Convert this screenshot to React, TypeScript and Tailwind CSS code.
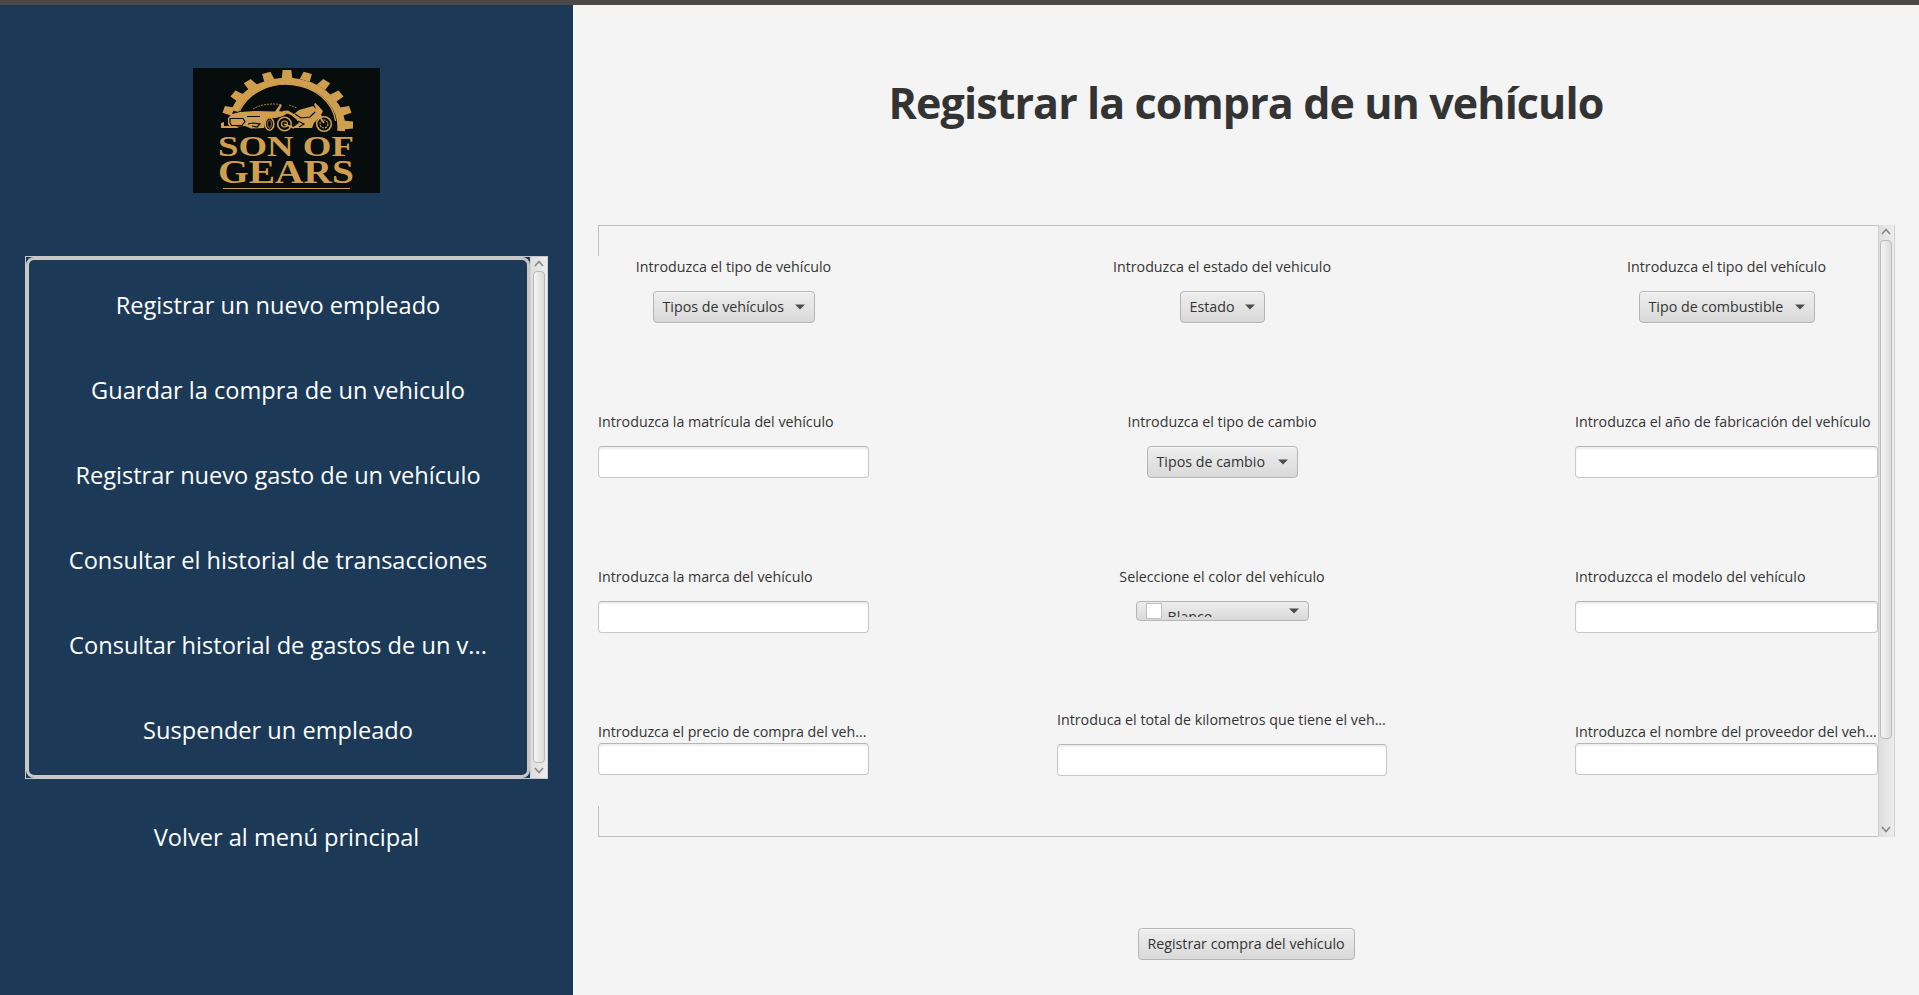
import type { ReactNode } from "react";

const MENU = [
  "Registrar un nuevo empleado",
  "Guardar la compra de un vehiculo",
  "Registrar nuevo gasto de un vehículo",
  "Consultar el historial de transacciones",
  "Consultar historial de gastos de un v...",
  "Suspender un empleado",
];

const TEETH = [-73.5, -55, -37, -18.3, 0, 18.3, 37, 55, 73.5, 90];

function Caret() {
  return (
    <svg viewBox="0 0 10 6" className="h-[6px] w-[10px] shrink-0">
      <path d="M0 .5h10L5 5.5z" fill="#4d4d4d" />
    </svg>
  );
}

function Combo({ text, width }: { text: string; width: string }) {
  return (
    <button
      className={`flex h-8 items-center justify-between rounded-[4px] border border-[#b5b5b5] bg-linear-to-b from-[#eeeeee] to-[#d9d9d9] pr-[9px] pl-[9px] shadow-[inset_0_1px_0_#f8f8f8,0_1px_0_#fafafa] ${width}`}
    >
      <span className="h-[22px] leading-[22px] whitespace-nowrap">{text}</span>
      <Caret />
    </button>
  );
}

function Field() {
  return (
    <input className="block h-8 w-full rounded-[4px] border border-[#c8c8c8] border-t-[#b5b5b5] bg-white shadow-[inset_0_2px_2px_#eeeeee] outline-none" />
  );
}

function Cell({ label, left, children }: { label: string; left?: boolean; children: ReactNode }) {
  return (
    <div className={`flex flex-col gap-[14px] ${left ? "items-start" : "items-center"}`}>
      <span className="h-5 leading-5 whitespace-nowrap">{label}</span>
      {children}
    </div>
  );
}

function Chevron({ up }: { up?: boolean }) {
  return (
    <svg viewBox="0 0 10 7" className="h-[7px] w-[10px] shrink-0">
      <path d={up ? "M1 6L5 1.5 9 6" : "M1 1l4 4.5L9 1"} fill="none" stroke="#858585" strokeWidth="1.5" />
    </svg>
  );
}

function ScrollBar({ size, thumb }: { size: string; thumb: string }) {
  return (
    <div
      className={`flex shrink-0 flex-col items-center border-x border-x-[#d0d0d0] bg-linear-to-r from-[#dedede] to-[#ededed] pb-[4px] ${size}`}
    >
      <Chevron up />
      <div className="mt-[4px] flex min-h-0 w-full flex-1 justify-center px-px">
        <div className={`w-full max-w-[12px] rounded-[4px] border border-[#b9b9b9] bg-linear-to-r from-[#f4f4f4] to-[#dcdcdc] ${thumb}`} />
      </div>
      <div className="mt-[4px] flex">
        <Chevron />
      </div>
    </div>
  );
}

function Logo() {
  return (
    <svg viewBox="0 0 187 125" className="h-[125px] w-[187px] bg-[#070c0d]">
      <g transform="translate(94 57) scale(1.2 1)">
        <g fill="#cf9f4f">
          {TEETH.map((a) => (
            <path key={a} d="M-4.400 -47L-3.600 -55H3.600L4.400 -47z" transform={`rotate(${a})`} />
          ))}
        </g>
        <path d="M-43.600 -14A45.800 45.800 0 0 1 45 6" fill="none" stroke="#cf9f4f" strokeWidth="6.500" />
        <path d="M-39.500 -14A41.500 41.500 0 0 1 40.500 -4" fill="none" stroke="#cf9f4f" strokeWidth="1.100" />
      </g>
      <path d="M60 41C66 37 76 35 88 36.500M96 37l8 3" fill="none" stroke="#cf9f4f" strokeWidth=".8" strokeDasharray="2 1" />
      <g fill="#cf9f4f">
        <path d="M35 50L39 46 47 44 62 43 82 43.500 87 36.500 89 37 86 43 95 45 90 48 83 50 77 50 72 55 71 60 58 60.500 52 58 37 59 35 56z" />
        <path d="M28 55l3-1v6h-3zM31 58h12l3 2H31z" />
        <path d="M88 43L95 42.500 101 46 106 42 113 40 120 38 123 41 121 36 122.500 35 130 43 128 47 132 51 125 51 121 55 119 60 99 60 106 55 103 51 98 47z" />
      </g>
      <g fill="none" stroke="#070c0d" strokeWidth="1.200">
        <path d="M37 50.500h13l2 3-3 4H38.500l-1.500-3zM54 48.500h13M55 56l5-1 7 1-3 3-5-1M102 46l6 4 9-1 6-6M105 53l6 3-5 3" />
      </g>
      <g fill="#070c0d" stroke="#cf9f4f" strokeWidth="1.600">
        <ellipse cx="76.500" cy="56" rx="4.300" ry="6.200" />
        <ellipse cx="76.500" cy="56" rx="2" ry="4" strokeWidth=".7" />
        <circle cx="91.500" cy="56" r="6.800" />
        <circle cx="131" cy="56" r="7.300" />
        <circle cx="91.500" cy="56" r="3" strokeWidth="1.200" />
        <circle cx="131" cy="56" r="4" strokeDasharray="2 1" strokeWidth="1.200" />
      </g>
      <path d="M91 56l10 4M122 42l9 13" stroke="#cf9f4f" strokeWidth="1.600" />
      <g fill="#cf9f4f" fontFamily="Liberation Serif, serif" fontWeight="700">
        <text x="25" y="88" fontSize="30" textLength="136" lengthAdjust="spacingAndGlyphs">SON OF</text>
        <text x="25" y="115" fontSize="34" textLength="136" lengthAdjust="spacingAndGlyphs">GEARS</text>
        <rect x="30" y="120" width="127" height="1" />
      </g>
    </svg>
  );
}

export default function App() {
  return (
    <div className="flex h-[995px] w-[1919px] flex-col overflow-hidden bg-[#f4f4f4] font-['Open_Sans',sans-serif] text-[14.25px] text-[#333333]">
      <div className="h-[5px] shrink-0 bg-[#4b4947]" />
      <div className="flex min-h-0 flex-1">
        <aside className="flex w-[573px] shrink-0 flex-col items-center bg-[#1c3a57] pt-[63px] text-[23.6px] text-white">
          <Logo />
          <div className="mt-[63px] flex h-[523px] w-[523px] border border-r-0 border-[#c8c8c8]">
            <nav className="flex flex-1 flex-col rounded-[8px] border-[3px] border-[#c8c8c8] pt-[3px]">
              {MENU.map((text) => (
                <a key={text} className="flex h-[85px] shrink-0 items-center justify-center whitespace-nowrap">
                  {text}
                </a>
              ))}
            </nav>
            <ScrollBar size="w-[18px] pt-[3px]" thumb="h-full" />
          </div>
          <a className="mt-[40px] leading-9 whitespace-nowrap">Volver al menú principal</a>
        </aside>
        <main className="flex min-w-0 flex-1 flex-col items-center">
          <h1 className="mt-[68px] h-[60px] text-[43px] leading-[60px] font-bold tracking-[-0.9px] whitespace-nowrap">
            Registrar la compra de un vehículo
          </h1>
          <section className="mt-[92px] ml-[25px] flex h-[612px] w-[1297px] self-start">
            <div className="flex min-w-0 flex-1 flex-col">
              <div className="h-[31px] border-t border-l border-[#c0c0c0]" />
              <div className="grid h-[550px] grid-cols-[271px_330px_303px] grid-rows-[155px_155px_143px_97px] justify-between pt-px">
                <Cell label="Introduzca el tipo de vehículo"><Combo text="Tipos de vehículos" width="w-[162px]" /></Cell>
                <Cell label="Introduzca el estado del vehiculo"><Combo text="Estado" width="w-[85px]" /></Cell>
                <Cell label="Introduzca el tipo del vehículo"><Combo text="Tipo de combustible" width="w-[176px]" /></Cell>
                <Cell left label="Introduzca la matrícula del vehículo"><Field /></Cell>
                <Cell label="Introduzca el tipo de cambio"><Combo text="Tipos de cambio" width="w-[151px]" /></Cell>
                <Cell left label="Introduzca el año de fabricación del vehículo"><Field /></Cell>
                <Cell left label="Introduzca la marca del vehículo"><Field /></Cell>
                <Cell label="Seleccione el color del vehículo">
                  <button className="flex h-5 w-[173px] items-center rounded-[4px] border border-[#b5b5b5] bg-linear-to-b from-[#eeeeee] to-[#d9d9d9] pr-[9px] pl-[9px]">
                    <span className="h-4 w-4 shrink-0 border border-[#c0c0c0] bg-white" />
                    <span className="ml-[6px] h-[11px] flex-1 overflow-hidden pt-px text-left leading-5">Blanco</span>
                    <Caret />
                  </button>
                </Cell>
                <Cell left label="Introduzcca el modelo del vehículo"><Field /></Cell>
                <div className="pt-[12px]">
                  <div className="h-[21px] leading-5 tracking-[-0.03px] whitespace-nowrap">Introduzca el precio de compra del veh...</div>
                  <Field />
                </div>
                <Cell left label="Introduca el total de kilometros que tiene el veh..."><Field /></Cell>
                <div className="pt-[12px]">
                  <div className="h-[21px] leading-5 tracking-[-0.03px] whitespace-nowrap">Introduzca el nombre del proveedor del veh...</div>
                  <Field />
                </div>
              </div>
              <div className="h-[31px] border-b border-l border-[#c0c0c0]" />
            </div>
            <ScrollBar size="w-[17px] pt-[3px] pr-px" thumb="mt-px h-[499px]" />
          </section>
          <button className="mt-[91px] flex h-8 w-[217px] items-center justify-center rounded-[4px] border border-[#b5b5b5] bg-linear-to-b from-[#eeeeee] to-[#d9d9d9] shadow-[inset_0_1px_0_#f8f8f8]">
            <span className="h-[22px] leading-[22px] whitespace-nowrap">Registrar compra del vehículo</span>
          </button>
        </main>
      </div>
    </div>
  );
}
